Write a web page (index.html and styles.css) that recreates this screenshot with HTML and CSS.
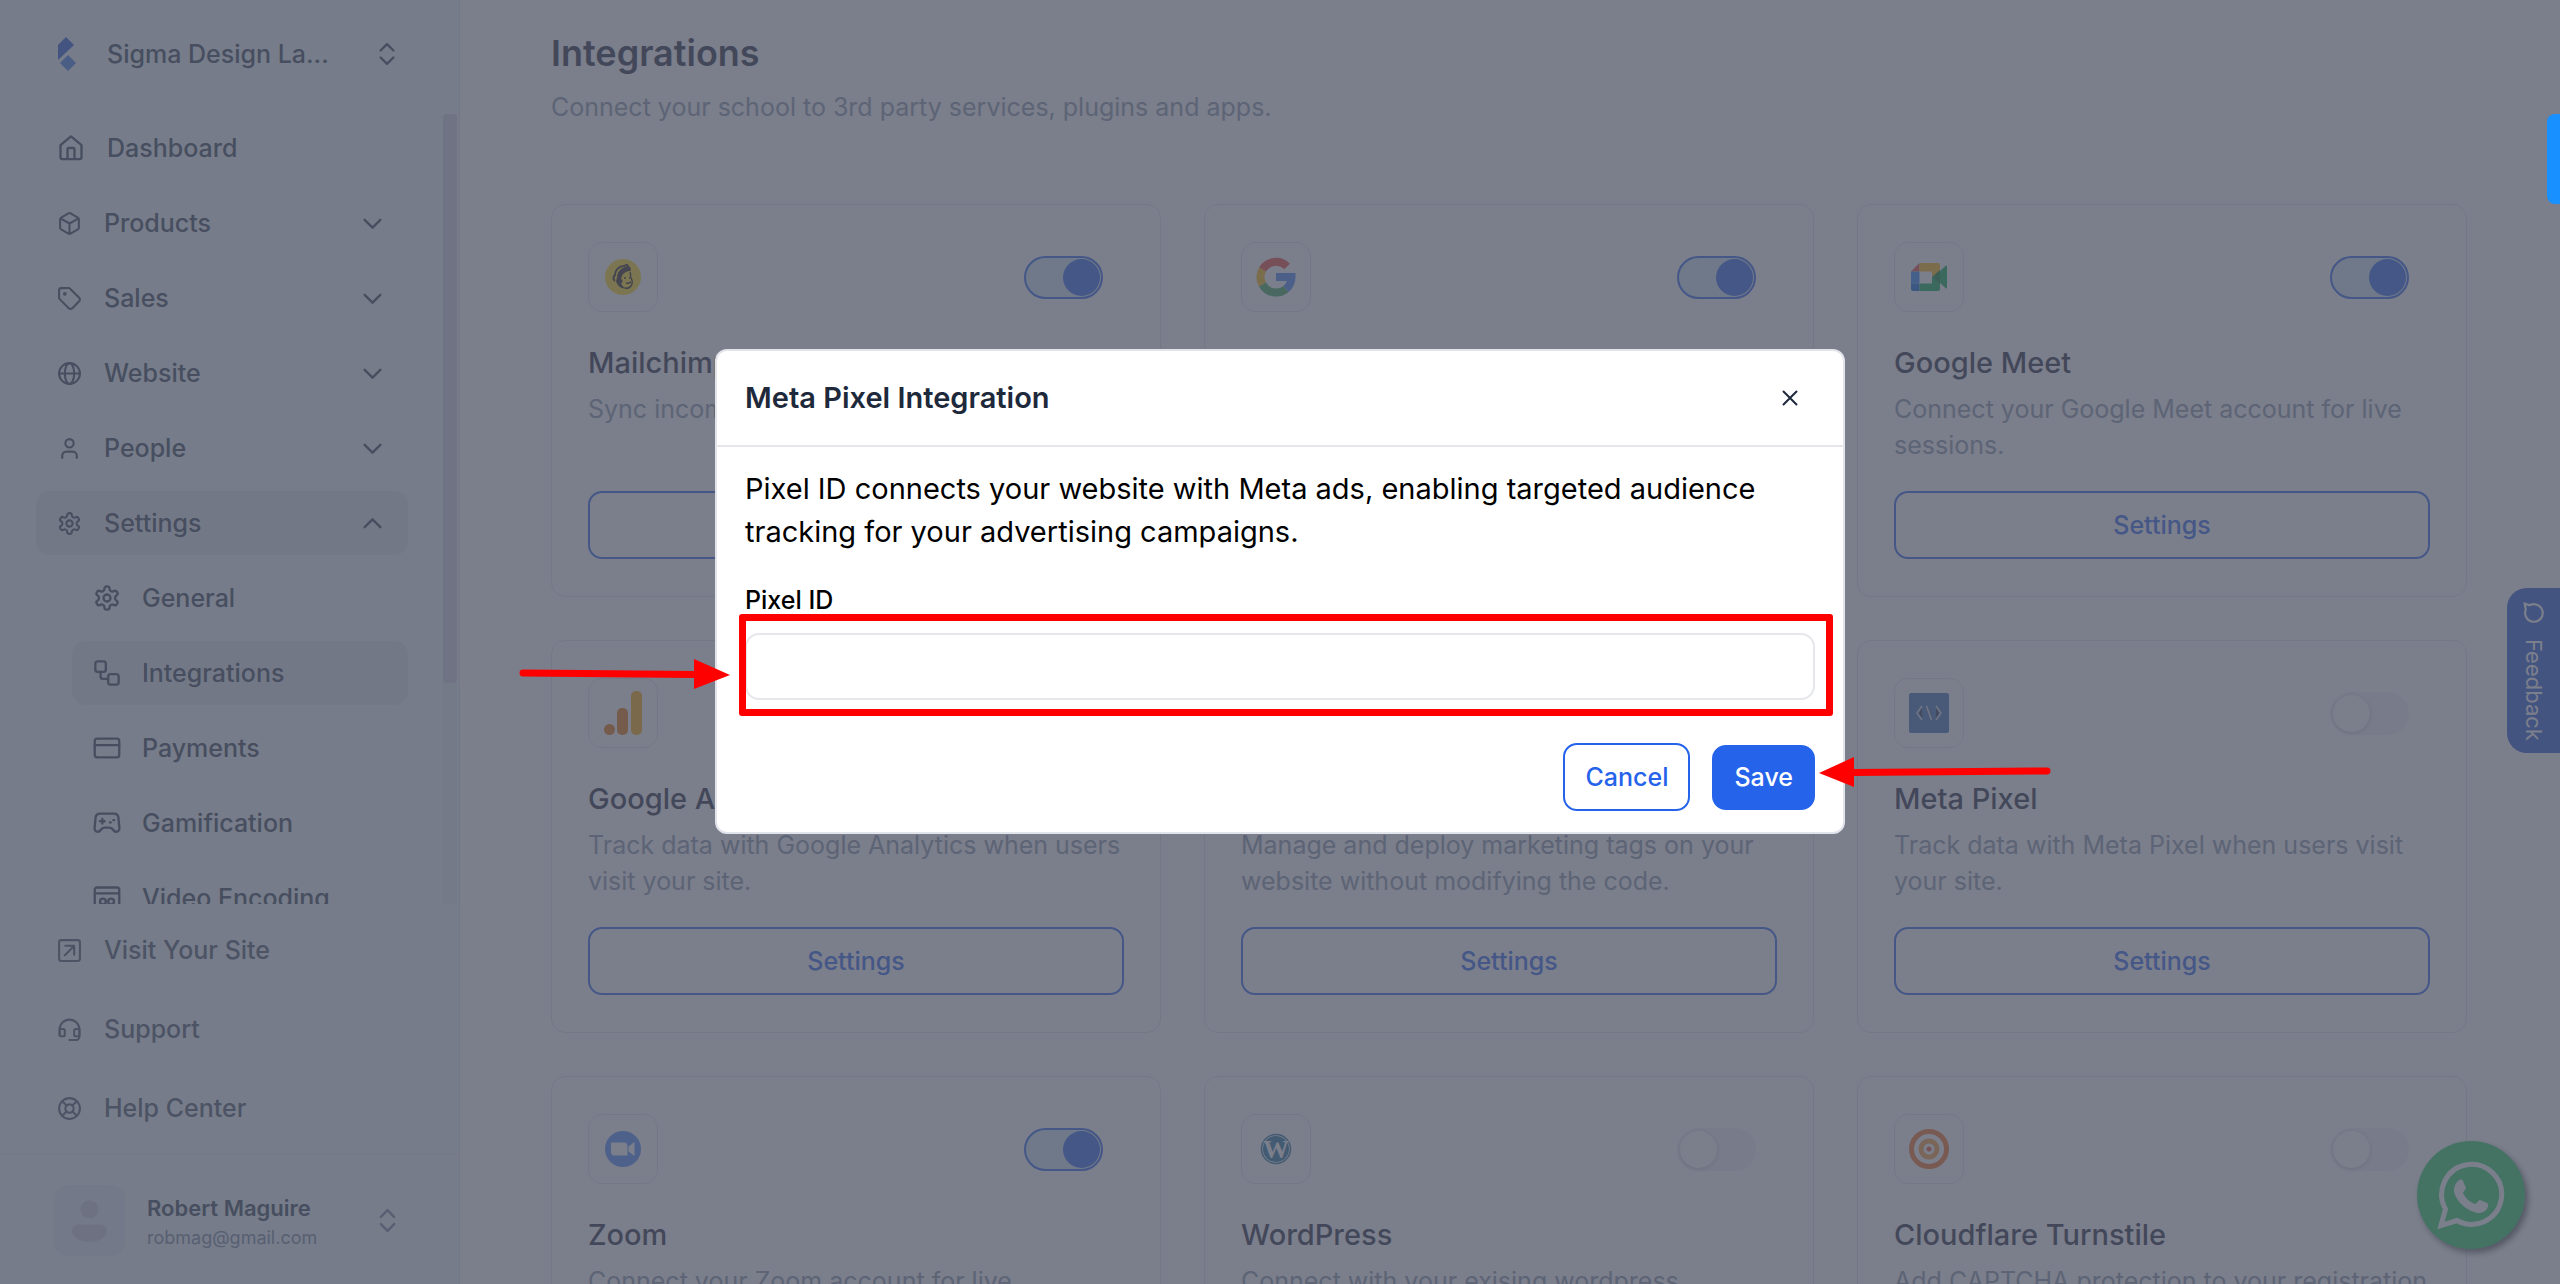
FILE: index.html
```html
<!DOCTYPE html>
<html lang="en">
<head>
    <meta charset="UTF-8">
    <meta name="viewport" content="width=device-width, initial-scale=1.0">
    <title>Integrations</title>
    <link rel="stylesheet" href="styles.css">
</head>
<body>
    <!-- Shared icons -->
    <svg class="sprite" aria-hidden="true">
        <symbol id="chevron-down" viewBox="0 0 24 24"><path d="m5.500 9 6.500 6.500L18.500 9"/></symbol>
        <symbol id="chevrons" viewBox="0 0 24 24"><path d="m6.500 9 5.500-5.500L17.500 9M6.500 15l5.500 5.500 5.500-5.500"/></symbol>
        <symbol id="gear" viewBox="0 0 24 24"><path d="M12.220 2h-.44a2 2 0 0 0-2 2v.18a2 2 0 0 1-1 1.730l-.43.25a2 2 0 0 1-2 0l-.15-.08a2 2 0 0 0-2.730.73l-.22.38a2 2 0 0 0 .73 2.730l.15.1a2 2 0 0 1 1 1.720v.51a2 2 0 0 1-1 1.740l-.15.09a2 2 0 0 0-.73 2.730l.22.38a2 2 0 0 0 2.730.73l.15-.08a2 2 0 0 1 2 0l.43.25a2 2 0 0 1 1 1.730V20a2 2 0 0 0 2 2h.44a2 2 0 0 0 2-2v-.18a2 2 0 0 1 1-1.730l.43-.25a2 2 0 0 1 2 0l.15.08a2 2 0 0 0 2.730-.73l.22-.39a2 2 0 0 0-.73-2.730l-.15-.08a2 2 0 0 1-1-1.740v-.5a2 2 0 0 1 1-1.740l.15-.09a2 2 0 0 0 .73-2.730l-.22-.38a2 2 0 0 0-2.730-.73l-.15.08a2 2 0 0 1-2 0l-.43-.25a2 2 0 0 1-1-1.730V4a2 2 0 0 0-2-2z"/><circle cx="12" cy="12" r="3"/></symbol>
    </svg>

    <div class="layout">
        <aside class="sidebar">
            <button class="school" type="button">
                <svg class="logo" viewBox="0 0 18 34"><path fill="#2457d6" d="M8 0 0 8v15L16 8z"/><path fill="#3b7be8" d="m10 18 8 8-8 8-8-8z"/></svg>
                <span class="school-name">Sigma Design La...</span>
                <svg class="icon icon-m"><use href="#chevrons"/></svg>
            </button>

            <div class="nav-wrap">
                <nav class="nav">
                    <a class="nav-item" href="#"><svg class="icon icon-m" viewBox="0 0 24 24"><path d="M15 21v-8a1 1 0 0 0-1-1h-4a1 1 0 0 0-1 1v8"/><path d="M3 9.500 12 2l9 7.500V20a1.500 1.500 0 0 1-1.500 1.500h-15A1.500 1.500 0 0 1 3 20z"/></svg><span>Dashboard</span></a>
                    <a class="nav-item" href="#"><svg class="icon" viewBox="0 0 24 24"><path d="M21 8a2 2 0 0 0-1-1.730l-7-4a2 2 0 0 0-2 0l-7 4A2 2 0 0 0 3 8v8a2 2 0 0 0 1 1.730l7 4a2 2 0 0 0 2 0l7-4A2 2 0 0 0 21 16zM3.300 7 12 12l8.700-5M12 22V12"/></svg><span>Products</span><svg class="icon chevron"><use href="#chevron-down"/></svg></a>
                    <a class="nav-item" href="#"><svg class="icon" viewBox="0 0 24 24"><path d="M12.600 2.600A2 2 0 0 0 11.200 2H4a2 2 0 0 0-2 2v7.200a2 2 0 0 0 .6 1.400l8.700 8.700a2.400 2.400 0 0 0 3.400 0l6.600-6.600a2.400 2.400 0 0 0 0-3.400z"/><circle cx="7.500" cy="7.500" r=".8"/></svg><span>Sales</span><svg class="icon chevron"><use href="#chevron-down"/></svg></a>
                    <a class="nav-item" href="#"><svg class="icon" viewBox="0 0 24 24"><circle cx="12" cy="12" r="10"/><ellipse cx="12" cy="12" rx="4.500" ry="10"/><path d="M2 12h20"/></svg><span>Website</span><svg class="icon chevron"><use href="#chevron-down"/></svg></a>
                    <a class="nav-item" href="#"><svg class="icon" viewBox="0 0 24 24"><path d="M19 21v-2a4 4 0 0 0-4-4H9a4 4 0 0 0-4 4v2"/><circle cx="12" cy="7" r="4"/></svg><span>People</span><svg class="icon chevron"><use href="#chevron-down"/></svg></a>
                    <a class="nav-item active" href="#"><svg class="icon"><use href="#gear"/></svg><span>Settings</span><svg class="icon chevron open"><use href="#chevron-down"/></svg></a>
                    <a class="nav-item sub" href="#"><svg class="icon icon-m"><use href="#gear"/></svg><span>General</span></a>
                    <a class="nav-item sub active" href="#"><svg class="icon icon-m" viewBox="0 0 24 24"><rect x="2" y="2" width="9" height="9" rx="2"/><path d="M6.500 11v4a2 2 0 0 0 2 2H13"/><rect x="13" y="13" width="9" height="9" rx="2"/></svg><span>Integrations</span></a>
                    <a class="nav-item sub" href="#"><svg class="icon icon-m" viewBox="0 0 24 24"><rect x="1.500" y="4" width="21" height="16" rx="2"/><path d="M1.500 9.500h21"/></svg><span>Payments</span></a>
                    <a class="nav-item sub" href="#"><svg class="icon icon-m" viewBox="0 0 24 24"><path d="M6 4h12c2.200 0 3.500 1.300 3.800 3.500l.8 8.500c.2 2-.9 3.500-2.600 3.500-1.300 0-2-.6-2.600-1.500-.9-1.400-1.700-2-3.400-2h-4c-1.700 0-2.500.6-3.400 2-.6.9-1.300 1.500-2.600 1.500-1.700 0-2.800-1.500-2.600-3.500l.8-8.500C2.500 5.300 3.800 4 6 4zM6 10.500h4M8 8.500v4M14.500 11.500h.6M17.500 9.500h.6"/></svg><span>Gamification</span></a>
                    <a class="nav-item sub" href="#"><svg class="icon icon-m" viewBox="0 0 24 24"><path d="M1.500 22V5a2 2 0 0 1 2-2h17a2 2 0 0 1 2 2v17zM1.500 8h21"/><circle cx="8.500" cy="15" r="2.500"/><circle cx="15.500" cy="15" r="2.500"/></svg><span>Video Encoding</span></a>
                </nav>
                <div class="scrollbar"><div class="scrollbar-thumb"></div></div>
            </div>

            <div class="links">
                <a class="nav-item" href="#"><svg class="icon" viewBox="0 0 24 24"><rect x="2" y="2" width="20" height="20" rx="2"/><path d="M8 7.500h8.500V16M16.500 7.500l-9 9"/></svg><span>Visit Your Site</span></a>
                <a class="nav-item" href="#"><svg class="icon" viewBox="0 0 24 24"><path d="M2.500 17v-5a9.500 9.500 0 0 1 19 0v7a3 3 0 0 1-3 3H12"/><path d="M2.500 11.500H6A1.500 1.500 0 0 1 7.500 13v4A1.500 1.500 0 0 1 6 18.500H4A1.500 1.500 0 0 1 2.500 17zM21.500 11.500H18a1.500 1.500 0 0 0-1.500 1.500v4a1.500 1.500 0 0 0 1.500 1.500h2a1.500 1.500 0 0 0 1.500-1.500z"/></svg><span>Support</span></a>
                <a class="nav-item" href="#"><svg class="icon" viewBox="0 0 24 24"><circle cx="12" cy="12" r="10"/><circle cx="12" cy="12" r="4"/><path d="m5 5 4.200 4.200M14.800 9.200 19 5M14.800 14.800 19 19M9.200 14.800 5 19"/></svg><span>Help Center</span></a>
            </div>

            <button class="profile" type="button">
                <span class="avatar"><svg viewBox="0 0 70 70"><circle cx="35" cy="24" r="9"/><path d="M25 39h20c5 0 8 4 7 8-2 6-9 9-17 9s-15-3-17-9c-1-4 2-8 7-8z"/></svg></span>
                <span class="profile-text">
                    <span class="profile-name">Robert Maguire</span>
                    <span class="profile-email">robmag@gmail.com</span>
                </span>
                <svg class="icon chevron"><use href="#chevrons"/></svg>
            </button>
        </aside>

        <main class="main">
            <h1>Integrations</h1>
            <p class="subtitle">Connect your school to 3rd party services, plugins and apps.</p>

            <div class="cards">
                <section class="card">
                    <div class="card-top">
                        <div class="card-icon"><svg viewBox="0 0 40 40"><circle cx="20" cy="20" r="18" fill="#ffe01b"/><path fill="none" stroke="#241c15" stroke-width="2" d="M12 24c-2-1-2-5 0-6 0-5 4-9 9-9l3-1 2 3c-6 0-10 3-11 8"/><path fill="#241c15" d="M15 17c2-5 6-8 12-7l1 4c-4 0-8 2-9 5l-1 3c2 0 2 4 0 4 1 3 3 5 6 5-6 2-10-3-11-7z"/><path fill="none" stroke="#241c15" stroke-width="1.500" d="M27 15c1 2 0 4 1 6s2 3 1 6-4 5-7 4M21 21h2M26 21h1M23 26c2 1 3 0 5-1"/></svg></div>
                        <input class="toggle" type="checkbox" aria-label="Mailchimp" checked>
                    </div>
                    <h2>Mailchimp</h2>
                    <p>Sync incoming users to Mailchimp.</p>
                    <button class="btn" type="button">Settings</button>
                </section>
                <section class="card">
                    <div class="card-top">
                        <div class="card-icon"><svg viewBox="0 0 40 40" fill="none" stroke-width="8"><path stroke="#ea4335" d="M31 9.500A15.500 15.500 0 0 0 6.500 12.500"/><path stroke="#fbbc05" d="M6.500 12.500a15.500 15.500 0 0 0 0 15"/><path stroke="#34a853" d="M6.500 27.500A15.500 15.500 0 0 0 30 32"/><path stroke="#4285f4" d="M30 32c3.500-3 5.500-7 5.500-12H20"/></svg></div>
                        <input class="toggle" type="checkbox" aria-label="Google" checked>
                    </div>
                    <h2>Google</h2>
                    <p>Let users log in with Google.</p>
                    <button class="btn" type="button">Settings</button>
                </section>
                <section class="card">
                    <div class="card-top">
                        <div class="card-icon"><svg viewBox="0 0 40 40"><path fill="#ea4335" d="M2 14.500 10.500 6v8.500z"/><path fill="#2684fc" d="M2 14.500h8.500v12H2z"/><path fill="#0066da" d="M2 26.500h8.500V34H4a2 2 0 0 1-2-2z"/><path fill="#ffba00" d="M10.500 6H29a2 2 0 0 1 2 2v6l-8 6v-5.500H10.500z"/><path fill="#00ac47" d="M10.500 34v-7.500H23V20l8 6v6a2 2 0 0 1-2 2zM31 14l6-5.500a1 1 0 0 1 1 .5v22a1 1 0 0 1-1 .5L31 26z"/><path fill="#00832d" d="m23 20 8-7v14z"/></svg></div>
                        <input class="toggle" type="checkbox" aria-label="Google Meet" checked>
                    </div>
                    <h2>Google Meet</h2>
                    <p>Connect your Google Meet account for live sessions.</p>
                    <button class="btn" type="button">Settings</button>
                </section>
                <section class="card">
                    <div class="card-top">
                        <div class="card-icon"><svg class="tall" viewBox="0 0 38 44"><rect x="27" y="0" width="11" height="44" rx="5" fill="#f9ab00"/><rect x="13" y="17" width="11" height="27" rx="5" fill="#e37400"/><circle cx="5.500" cy="38.500" r="5.500" fill="#e37400"/></svg></div>
                        <input class="toggle" type="checkbox" aria-label="Google Analytics" checked>
                    </div>
                    <h2>Google Analytics</h2>
                    <p>Track data with Google Analytics when users visit your site.</p>
                    <button class="btn" type="button">Settings</button>
                </section>
                <section class="card">
                    <div class="card-top">
                        <div class="card-icon"><svg viewBox="0 0 40 40"><path fill="#4285f4" d="M20 2 38 20 20 38 2 20z"/><circle cx="20" cy="20" r="6" fill="#fff"/></svg></div>
                        <input class="toggle" type="checkbox" aria-label="Google Tag Manager">
                    </div>
                    <h2>Google Tag Manager</h2>
                    <p>Manage and deploy marketing tags on your website without modifying the code.</p>
                    <button class="btn" type="button">Settings</button>
                </section>
                <section class="card">
                    <div class="card-top">
                        <div class="card-icon"><svg viewBox="0 0 40 40"><rect width="40" height="40" rx="2" fill="#3b6db3"/><path fill="none" stroke="#d5d9e0" stroke-width="1.500" d="m13 13-5 7 5 7M27 13l5 7-5 7M17.500 13l5 14"/><path fill="#26334d" d="m13 15-3 5 3 5zM27 15l3 5-3 5z"/></svg></div>
                        <input class="toggle" type="checkbox" aria-label="Meta Pixel">
                    </div>
                    <h2>Meta Pixel</h2>
                    <p>Track data with Meta Pixel when users visit your site.</p>
                    <button class="btn" type="button">Settings</button>
                </section>
                <section class="card">
                    <div class="card-top">
                        <div class="card-icon"><svg viewBox="0 0 40 40"><circle cx="20" cy="20" r="18" fill="#4a8cff"/><path fill="#fff" d="M8 13.500h13a3.500 3.500 0 0 1 3.500 3.500v9.500h-13A3.500 3.500 0 0 1 8 23zM25.500 17.500l6-4.500v14l-6-4.500z"/></svg></div>
                        <input class="toggle" type="checkbox" aria-label="Zoom" checked>
                    </div>
                    <h2>Zoom</h2>
                    <p>Connect your Zoom account for live sessions.</p>
                    <button class="btn" type="button">Settings</button>
                </section>
                <section class="card">
                    <div class="card-top">
                        <div class="card-icon"><svg viewBox="0 0 40 40"><circle cx="20" cy="20" r="14.500" fill="#fff" stroke="#21759b" stroke-width="1.500"/><circle cx="20" cy="20" r="13" fill="#21759b"/><text class="wp" x="20" y="29" text-anchor="middle">W</text></svg></div>
                        <input class="toggle" type="checkbox" aria-label="WordPress">
                    </div>
                    <h2>WordPress</h2>
                    <p>Connect with your exising wordpress website.</p>
                    <button class="btn" type="button">Settings</button>
                </section>
                <section class="card">
                    <div class="card-top">
                        <div class="card-icon"><svg viewBox="0 0 40 40" fill="none"><circle cx="20" cy="20" r="17.500" stroke="#f4711f" stroke-width="5"/><circle cx="20" cy="20" r="8" stroke="#f9a13a" stroke-width="5"/><circle cx="20" cy="20" r="2.500" fill="#f4511f"/></svg></div>
                        <input class="toggle" type="checkbox" aria-label="Cloudflare Turnstile">
                    </div>
                    <h2>Cloudflare Turnstile</h2>
                    <p>Add CAPTCHA protection to your registration form.</p>
                    <button class="btn" type="button">Settings</button>
                </section>
            </div>
        </main>
    </div>

    <button class="feedback" type="button">
        <svg viewBox="0 0 20 20"><path d="M1.500 1.500 6 3a8 8 0 1 1-3.500 4z"/></svg>
        <span>Feedback</span>
    </button>

    <a class="whatsapp" href="#" aria-label="WhatsApp">
        <svg viewBox="0 0 68 68"><path fill="none" stroke="#fff" stroke-width="5" d="M4 64.500 8.500 48A30 30 0 1 1 20 59.500z"/><path fill="#fff" d="M21 20c2-2 4-2 5 0l3 7c0 2-3 3-3 5 3 6 7 9 12 11 2 0 3-4 5-4l7 3c2 1 1 4 0 6-3 4-8 5-13 3-9-3-16-10-19-17-2-5-1-10 3-14z"/></svg>
    </a>

    <!-- Modal -->
    <div class="overlay">
        <div class="modal" role="dialog" aria-labelledby="modalTitle">
            <div class="modal-header">
                <h2 id="modalTitle">Meta Pixel Integration</h2>
                <button class="close" type="button" aria-label="Close"><svg viewBox="0 0 16 16"><path d="m1.500 1.500 13 13M14.500 1.500l-13 13"/></svg></button>
            </div>
            <form class="modal-body">
                <p>Pixel ID connects your website with Meta ads, enabling targeted audience tracking for your advertising campaigns.</p>
                <label for="pixelId">Pixel ID</label>
                <div class="field">
                    <input type="text" id="pixelId">
                    <svg class="arrow arrow-right" viewBox="0 0 212 30"><path class="line" d="M5 14l173 1.500"/><path d="M176 0v30l36-14z"/></svg>
                </div>
                <div class="actions">
                    <button class="btn" type="button">Cancel</button>
                    <div class="save-wrap">
                        <button class="btn btn-primary" type="submit">Save</button>
                        <svg class="arrow arrow-left" viewBox="0 0 232 30"><path class="line" d="M228 14 34 15.500"/><path d="M35 0v30L0 16z"/></svg>
                    </div>
                </div>
            </form>
        </div>
    </div>

    <div class="side-tab"></div>
</body>
</html>
```
FILE: styles.css
```css
* {
    box-sizing: border-box;
}

body {
    margin: 0;
    font-family: Inter, sans-serif;
    font-size: 25px;
    line-height: 36px;
    color: #1e293b;
    background: #fff;
    overflow: hidden;
}

h1, h2, p {
    margin: 0;
}

a {
    color: inherit;
    text-decoration: none;
}

button, input {
    font: inherit;
}

.sprite {
    position: absolute;
    width: 0;
    height: 0;
}

.layout {
    display: flex;
    height: 100vh;
}

/* Sidebar */
.sidebar {
    flex: none;
    display: flex;
    flex-direction: column;
    width: 460px;
    background: #ecf5f7;
    border-right: 1px solid #dde4ec;
    color: #2f4152;
    font-weight: 500;
}

.school, .profile {
    display: flex;
    align-items: center;
    border: none;
    background: none;
    color: inherit;
    text-align: left;
}

.school {
    height: 114px;
    padding: 0 58px 6px;
    font-weight: 500;
}

.logo {
    width: 18px;
    height: 34px;
    margin-right: 31px;
}

.school-name {
    flex: 1;
}

.icon {
    flex: none;
    width: 25px;
    height: 25px;
    fill: none;
    stroke: currentColor;
    stroke-width: 2;
    stroke-linecap: round;
    stroke-linejoin: round;
}

.icon-m {
    width: 28px;
    height: 28px;
}

.nav-wrap {
    display: flex;
    flex: 1;
    min-height: 0;
}

.nav {
    flex: 1;
    display: flex;
    flex-direction: column;
    gap: 11px;
    padding: 2px 35px 0 36px;
    overflow: hidden;
}

.nav-item {
    flex: none;
    display: flex;
    align-items: center;
    gap: 22px;
    height: 64px;
    padding: 0 21px;
    border-radius: 14px;
}

.nav-item.sub {
    gap: 21px;
    margin-left: 36px;
}

.nav-item.active {
    background: #dfe7ec;
}

.chevron {
    width: 29px;
    height: 29px;
    margin-left: auto;
}

.chevron.open {
    transform: rotate(180deg);
}

.scrollbar {
    width: 14px;
    margin-right: 2px;
    background: #e8eef3;
}

.scrollbar-thumb {
    height: 72%;
    border-radius: 4px;
    background: #d0d1e0;
}

.links {
    display: flex;
    flex-direction: column;
    gap: 15px;
    padding: 14px 36px;
    color: #435566;
}

.profile {
    height: 130px;
    padding: 2px 57px 0 54px;
    border-top: 1px solid #dde4ec;
}

.avatar {
    width: 71px;
    height: 71px;
    margin-right: 22px;
    border-radius: 14px;
    background: #e4eafa;
    fill: #c6ccda;
}

.profile-text {
    display: flex;
    flex-direction: column;
    padding-top: 4px;
    line-height: 29px;
}

.profile-name {
    font-size: 22px;
    font-weight: 600;
}

.profile-email {
    font-size: 18px;
    font-weight: 400;
    color: #72849a;
}

.profile .chevron {
    color: #72849a;
}

/* Content */
.main {
    flex: 1;
    min-width: 0;
    padding: 31px 93px 0 91px;
    overflow: hidden;
}

h1 {
    font-size: 36px;
    font-weight: 600;
    line-height: 44px;
}

.subtitle {
    margin: 14px 0 79px;
    color: #8496a8;
}

.cards {
    display: grid;
    grid-template-columns: repeat(3, 1fr);
    gap: 43px;
}

.card {
    display: flex;
    flex-direction: column;
    height: 393px;
    padding: 37px 36px;
    border: 1px solid #e0e6ed;
    border-radius: 14px;
}

.card-top {
    display: flex;
    align-items: center;
    justify-content: space-between;
    margin-bottom: 31px;
    padding-right: 21px;
}

.card-icon {
    display: flex;
    align-items: center;
    justify-content: center;
    width: 70px;
    height: 70px;
    border: 1px solid #e0e6ed;
    border-radius: 14px;
}

.card-icon svg {
    width: 40px;
    height: 40px;
}

.card-icon .tall {
    height: 44px;
}

.wp {
    font: bold 26px "Liberation Serif", serif;
    fill: #fff;
}

.toggle {
    appearance: none;
    display: flex;
    align-items: center;
    width: 79px;
    height: 43px;
    margin: 0;
    padding: 1px;
    border: 2px solid transparent;
    border-radius: 22px;
    background: #f1f5f9;
    background-clip: border-box;
}

.toggle::before {
    content: "";
    width: 37px;
    height: 37px;
    border-radius: 50%;
    background: #fff;
    box-shadow: 0 1px 4px rgba(0, 0, 0, 0.2);
}

.toggle:checked {
    justify-content: flex-end;
    border-color: #2563eb;
    background: #d3e9fa;
}

.toggle:checked::before {
    background: #2563eb;
    box-shadow: none;
}

.card h2 {
    margin-bottom: 8px;
    font-size: 29px;
    font-weight: 500;
    line-height: 40px;
}

.card p {
    color: #8496a8;
}

.btn {
    height: 68px;
    padding: 0 20px;
    border: 2px solid #2563eb;
    border-radius: 14px;
    background: none;
    color: #2563eb;
    font-weight: 500;
}

.card .btn {
    margin-top: auto;
}

/* Floating buttons */
.feedback {
    position: fixed;
    right: 0;
    top: 588px;
    display: flex;
    align-items: center;
    gap: 15px;
    width: 53px;
    height: 165px;
    padding: 14px 0;
    border: none;
    border-radius: 20px 0 0 20px;
    background: #2057d8;
    color: #fff;
    font-size: 22px;
    writing-mode: vertical-rl;
}

.feedback svg {
    flex: none;
    width: 22px;
    height: 22px;
    fill: none;
    stroke: #fff;
    stroke-width: 2;
}

.whatsapp {
    position: fixed;
    right: 35px;
    bottom: 35px;
    display: flex;
    align-items: center;
    justify-content: center;
    width: 108px;
    height: 108px;
    border-radius: 50%;
    background: #25d366;
    box-shadow: 3px 4px 6px rgba(0, 0, 0, 0.6);
}

.whatsapp svg {
    width: 68px;
    height: 68px;
}

.side-tab {
    position: fixed;
    right: 0;
    top: 114px;
    width: 13px;
    height: 90px;
    border-radius: 8px 0 0 8px;
    background: #1890ff;
}

/* Modal */
.overlay {
    position: fixed;
    inset: 0;
    display: flex;
    justify-content: center;
    align-items: flex-start;
    padding-top: 349px;
    background: rgba(79, 83, 100, 0.75);
}

.modal {
    width: 1130px;
    border: 2px solid #e2e4ec;
    border-radius: 12px;
    background: #fff;
}

.modal-header {
    display: flex;
    align-items: center;
    justify-content: space-between;
    height: 96px;
    padding: 0 28px;
    border-bottom: 2px solid #e5e7eb;
}

.modal-header h2 {
    font-size: 29px;
    font-weight: 600;
}

.close {
    display: flex;
    padding: 17px;
    border: none;
    background: none;
}

.close svg {
    width: 16px;
    height: 16px;
    stroke: #1e293b;
    stroke-width: 2;
    stroke-linecap: round;
}

.modal-body {
    padding: 20px 28px 21px;
    color: #000;
}

.modal-body p {
    margin-bottom: 29px;
    font-size: 29px;
    line-height: 43px;
}

.modal-body label {
    display: block;
    margin-bottom: 15px;
    font-weight: 500;
}

.field {
    position: relative;
    margin-bottom: 43px;
}

.field input {
    display: block;
    width: 100%;
    height: 67px;
    padding: 0 20px;
    border: 2px solid #e5e7eb;
    border-radius: 14px;
}

/* Red highlight around the input */
.field::after {
    content: "";
    position: absolute;
    inset: -19px -18px -16px -6px;
    border: 7px solid #f00;
    border-radius: 3px;
    pointer-events: none;
}

.actions {
    display: flex;
    justify-content: flex-end;
    align-items: center;
    gap: 22px;
}

.save-wrap {
    position: relative;
    display: flex;
}

.btn-primary {
    height: 65px;
    background: #2563eb;
    color: #fff;
}

.arrow {
    position: absolute;
    height: 30px;
    fill: #f00;
}

.arrow .line {
    stroke: #f00;
    stroke-width: 7;
    stroke-linecap: round;
}

.arrow-right {
    right: 100%;
    top: 26px;
    width: 212px;
    margin-right: 15px;
}

.arrow-left {
    left: 100%;
    top: 12px;
    width: 232px;
    margin-left: 4px;
}
```
